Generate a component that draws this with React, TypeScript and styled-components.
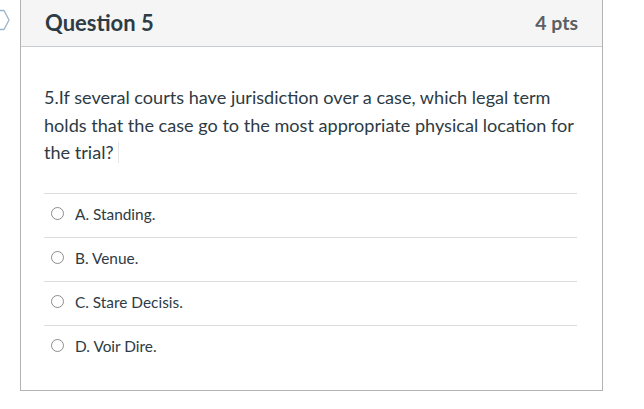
import styled, { createGlobalStyle } from "styled-components";

const answers = ["A. Standing.", "B. Venue.", "C. Stare Decisis.", "D. Voir Dire."];

const App = () => {
  return (
    <>
      <GlobalStyle />
      <Page>
        <Gutter>
          <svg width="12" height="22" viewBox="0 0 12 22">
            <path
              d="M0 1.5 H4 L9 11 L4 20.5 H0"
              fill="none"
              stroke="#9bb3c9"
              strokeWidth="1.3"
              strokeLinejoin="round"
            />
          </svg>
        </Gutter>
        <Card>
          <Header>
            <Title>Question 5</Title>
            <Points>4 pts</Points>
          </Header>
          <Body>
            <QuestionText>
              5.If several courts have jurisdiction over a case, which legal term holds that the
              case go to the most appropriate physical location for the trial?
              <Caret />
            </QuestionText>
            <AnswerList>
              {answers.map((a) => (
                <AnswerRow key={a}>
                  <Radio />
                  <AnswerLabel>{a}</AnswerLabel>
                </AnswerRow>
              ))}
            </AnswerList>
          </Body>
        </Card>
      </Page>
    </>
  );
};

//*STYLES
const GlobalStyle = createGlobalStyle`
  body {
    margin: 0;
    background: #fff;
    font-family: Lato, "Liberation Sans", sans-serif;
    color: #2d3b45;
  }
`;

const Page = styled.div`
  display: flex;
  align-items: flex-start;
`;

const Gutter = styled.div`
  width: 20px;
  flex: none;
  padding-top: 9px;
  display: flex;
`;

const Card = styled.div`
  width: 581px;
  border: 1px solid #b3b3b3;
  border-top: none;
  background: #fff;
`;

const Header = styled.div`
  height: 47px;
  box-sizing: border-box;
  background: #f5f5f5;
  border-bottom: 1px solid #c7cdd1;
  display: flex;
  align-items: center;
  justify-content: space-between;
  padding: 0 24px 2px 24px;
`;

const Title = styled.div`
  font-size: 22px;
  font-weight: 700;
  color: #2d3b45;
`;

const Points = styled.div`
  font-size: 19.5px;
  font-weight: 700;
  color: #5a5f63;
`;

const Body = styled.div`
  padding: 37px 24px 21px 23px;
`;

const QuestionText = styled.p`
  margin: 0;
  font-size: 18.1px;
  line-height: 27.5px;
  color: #2d3b45;
`;

const Caret = styled.span`
  display: inline-block;
  width: 1px;
  height: 21px;
  margin-left: 4px;
  vertical-align: -4px;
  background: #e6e6e6;
`;

const AnswerList = styled.div`
  margin-top: 26px;
  margin-right: 1px;
`;

const AnswerRow = styled.div`
  height: 44px;
  box-sizing: border-box;
  border-top: 1px solid #dcdcdc;
  display: flex;
  align-items: center;
  padding-left: 7px;
  padding-bottom: 3px;
`;

const Radio = styled.span`
  width: 11px;
  height: 11px;
  border: 1px solid #8c8c8c;
  border-radius: 50%;
  flex: none;
  margin-right: 11px;
`;

const AnswerLabel = styled.span`
  font-size: 15.4px;
  color: #2d3b45;
`;

export default App;
